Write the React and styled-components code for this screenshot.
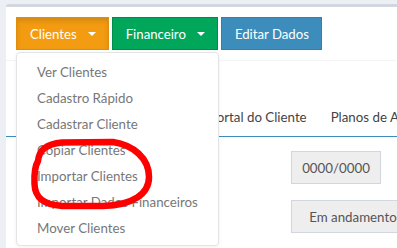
import styled, { createGlobalStyle } from 'styled-components'

const GlobalStyle = createGlobalStyle`
  html, body {
    margin: 0;
    background: #ecf0f5;
    font-family: Lato, "Liberation Sans", sans-serif;
  }
`

const Page = styled.div`
  position: relative;
  width: 397px;
  height: 248px;
  overflow: hidden;
  padding: 4px 0 0 6px;
  box-sizing: border-box;
`

const Box = styled.div`
  background: #fff;
  border-top: 3px solid #d2d6de;
  border-radius: 3px 0 0 0;
  height: 400px;
`

const BoxHeader = styled.div`
  display: flex;
  gap: 3px;
  padding: 10px 10px 10px;
  border-bottom: 1px solid #f4f4f4;
`

const BtnGroup = styled.div`
  position: relative;
`

const colors = {
  warning: ['#f39c12', '#e08e0b'],
  success: ['#00a65a', '#008d4c'],
  primary: ['#3c8dbc', '#367fa9'],
}

const Button = styled.button`
  display: flex;
  align-items: center;
  gap: 11px;
  height: 33px;
  padding: 0 12px 0 13px;
  border: 1px solid ${(p) => colors[p.$variant][1]};
  background: ${(p) => colors[p.$variant][0]};
  color: #fff;
  font-family: inherit;
  font-size: 13.2px;
  border-radius: 0;
  box-shadow: ${(p) => (p.$active ? 'inset 0 3px 5px rgba(0,0,0,0.125)' : 'none')};
`

const Caret = styled.span`
  width: 0;
  height: 0;
  border-top: 4px solid #fff;
  border-left: 4px solid transparent;
  border-right: 4px solid transparent;
`

const Menu = styled.ul`
  position: absolute;
  top: 35px;
  left: 0;
  z-index: 10;
  width: 203px;
  margin: 0;
  padding: 6px 0 4px;
  list-style: none;
  background: #fff;
  border: 1px solid #e4e4e4;
  border-radius: 4px;
  box-shadow: 0 1px 4px rgba(0, 0, 0, 0.06);
  box-sizing: border-box;
`

const MenuItem = styled.li`
  padding: 0 0 0 20px;
  line-height: 26px;
  font-size: 13.3px;
  color: #777;
  white-space: nowrap;
`

const BoxBody = styled.div`
  padding: 36px 0 0 0;
`

const Tabs = styled.ul`
  display: flex;
  margin: 0;
  padding: 0 0 0 191px;
  list-style: none;
  border-bottom: 1px solid #3c8dbc;
`

const Tab = styled.li`
  padding: 10px 12px 9px;
  line-height: 20px;
  font-size: 13.3px;
  color: #444;
  white-space: nowrap;
`

const Form = styled.div`
  display: flex;
  flex-direction: column;
  gap: 16px;
  padding: 14px 0 0 285px;
`

const Field = styled.div`
  width: ${(p) => p.$w}px;
  height: 33px;
  display: flex;
  align-items: center;
  justify-content: center;
  flex-shrink: 0;
  background: #eee;
  border: 1px solid #d2d6de;
  box-sizing: border-box;
  font-size: 13.3px;
  color: #555;
  white-space: nowrap;
`

const Scribble = styled.svg`
  position: absolute;
  left: 0;
  top: 0;
  pointer-events: none;
  z-index: 20;
`

export default function App() {
  return (
    <Page>
      <GlobalStyle />
      <Box>
        <BoxHeader>
          <BtnGroup>
            <Button $variant="warning" $active>
              Clientes <Caret />
            </Button>
            <Menu>
              <MenuItem>Ver Clientes</MenuItem>
              <MenuItem>Cadastro Rápido</MenuItem>
              <MenuItem>Cadastrar Cliente</MenuItem>
              <MenuItem>Copiar Clientes</MenuItem>
              <MenuItem>Importar Clientes</MenuItem>
              <MenuItem>Importar Dados Financeiros</MenuItem>
              <MenuItem>Mover Clientes</MenuItem>
            </Menu>
          </BtnGroup>
          <BtnGroup>
            <Button $variant="success">
              Financeiro <Caret />
            </Button>
          </BtnGroup>
          <Button $variant="primary">Editar Dados</Button>
        </BoxHeader>
        <BoxBody>
          <Tabs>
            <Tab>Portal do Cliente</Tab>
            <Tab>Planos de Acesso</Tab>
          </Tabs>
          <Form>
            <Field $w={90}>0000/0000</Field>
            <Field $w={124}>Em andamento</Field>
          </Form>
        </BoxBody>
      </Box>
      <Scribble width="397" height="248" viewBox="0 0 397 248">
        <path
          d="M38 161 C39 150 46 144 62 142.5 L113 142 C133 145 149 158 149 177 C149 194 133 205 103 206 L62 206 C44 205 35 198 34.5 184 C34 173 35 166 38 161 Z"
          fill="none"
          stroke="#ff0000"
          strokeWidth="6.5"
          strokeLinejoin="round"
        />
      </Scribble>
    </Page>
  )
}
